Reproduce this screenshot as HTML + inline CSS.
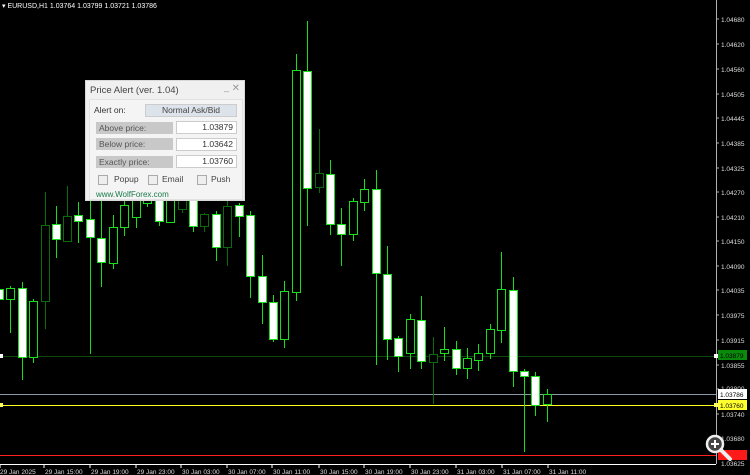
<!DOCTYPE html>
<html><head><meta charset="utf-8"><style>
html,body{margin:0;padding:0;background:#000;width:750px;height:475px;overflow:hidden;font-family:"Liberation Sans",sans-serif}
#c{position:absolute;left:0;top:0}
.dlg{position:absolute;left:85px;top:80px;width:160px;height:121px;background:#f0f0f0;border:1px solid #d8d8d8;box-sizing:border-box;font-size:9px;color:#333}
.dlg .t{position:absolute;left:4px;top:4px;font-size:9.5px;color:#444}
.dlg .x{position:absolute;right:4px;top:2px;color:#999;font-size:10px}
.dlg .m{position:absolute;right:15px;top:1px;color:#999;font-size:9px}
.pn{position:absolute;left:3px;top:18px;width:152px;height:99px;border:1px solid #e2e2e2;background:#f4f4f4}
.ab{position:absolute;font-size:8.5px}
.lbl{position:absolute;left:10px;width:77px;height:12px;background:#c8c8c8;color:#555;line-height:12px;padding-left:3px;box-sizing:border-box;font-size:8.5px}
.ed{position:absolute;left:90px;width:61px;height:13px;background:#fff;border:1px solid #ccc;box-sizing:border-box;text-align:right;padding-right:3px;line-height:11px;font-size:8.5px;color:#333}
.cb{position:absolute;top:94px;width:8px;height:8px;border:1px solid #aaa;background:#eee}
.ct{position:absolute;top:93px;font-size:8.5px;color:#444}
</style></head><body>
<svg id="c" width="750" height="475" xmlns="http://www.w3.org/2000/svg" shape-rendering="crispEdges">
<text x="2" y="8" fill="#fff" font-size="7" font-family="Liberation Sans">▾ EURUSD,H1  1.03764 1.03799 1.03721 1.03786</text>
<line x1="716.5" y1="0" x2="716.5" y2="464" stroke="#b0b0b0"/>
<g fill="#ddd" font-size="6.5" font-family="Liberation Sans">
<text x="721" y="22">1.04680</text><text x="721" y="47">1.04620</text><text x="721" y="72">1.04560</text><text x="721" y="97">1.04505</text><text x="721" y="121">1.04445</text><text x="721" y="146">1.04385</text><text x="721" y="171">1.04325</text><text x="721" y="195">1.04270</text><text x="721" y="220">1.04210</text><text x="721" y="244">1.04150</text><text x="721" y="269">1.04090</text><text x="721" y="293">1.04035</text><text x="721" y="318">1.03975</text><text x="721" y="343">1.03915</text><text x="721" y="368">1.03855</text><text x="721" y="391">1.03800</text><text x="721" y="417">1.03740</text><text x="721" y="441">1.03680</text><text x="721" y="466">1.03625</text>
</g>
<g stroke="#b0b0b0"><path d="M716 19h3M716 44h3M716 69h3M716 94h3M716 118h3M716 143h3M716 168h3M716 192h3M716 217h3M716 241h3M716 266h3M716 290h3M716 315h3M716 340h3M716 365h3M716 389h3M716 414h3M716 438h3"/></g>
<line x1="0" y1="356.5" x2="716" y2="356.5" stroke="#0c4a0c"/>
<line x1="0" y1="394.5" x2="716" y2="394.5" stroke="#8a9aa8"/>
<line x1="0" y1="405.5" x2="716" y2="405.5" stroke="#ffff20"/>
<line x1="0" y1="455.5" x2="716" y2="455.5" stroke="#ff2020"/>
<line x1="0" y1="464.5" x2="716" y2="464.5" stroke="#fff"/>
<rect x="714" y="354" width="4" height="4" fill="#fff"/><rect x="0" y="354" width="3" height="4" fill="#fff"/>
<rect x="714" y="403" width="4" height="4" fill="#ffff60"/><rect x="0" y="403" width="3" height="4" fill="#ffff60"/>
<rect x="718" y="350" width="29" height="10" fill="#0a8a0a"/><text x="720" y="358" fill="#000" font-size="6.5" font-family="Liberation Sans">1.03879</text>
<rect x="718" y="389" width="29" height="10" fill="#fff"/><text x="720" y="397" fill="#000" font-size="6.5" font-family="Liberation Sans">1.03786</text>
<rect x="718" y="400" width="29" height="10" fill="#ffff30"/><text x="720" y="408" fill="#000" font-size="6.5" font-family="Liberation Sans">1.03760</text>
<rect x="718" y="450" width="29" height="10" fill="#ff1a1a"/>
<g stroke="#fff"><path d="M0 465v3M44 465v3M90 465v3M136 465v3M181 465v3M227 465v3M272 465v3M319 465v3M364 465v3M410 465v3M456 465v3M502 465v3M548 465v3"/></g>
<g fill="#ddd" font-size="6.5" font-family="Liberation Sans">
<text x="0" y="474">29 Jan 2025</text><text x="45" y="474">29 Jan 15:00</text><text x="91" y="474">29 Jan 19:00</text><text x="137" y="474">29 Jan 23:00</text><text x="182" y="474">30 Jan 03:00</text><text x="228" y="474">30 Jan 07:00</text><text x="273" y="474">30 Jan 11:00</text><text x="320" y="474">30 Jan 15:00</text><text x="365" y="474">30 Jan 19:00</text><text x="411" y="474">30 Jan 23:00</text><text x="457" y="474">31 Jan 03:00</text><text x="503" y="474">31 Jan 07:00</text><text x="549" y="474">31 Jan 11:00</text>
</g>
<g id="cs"></g>
<g>
<circle cx="715" cy="444" r="8" fill="#444" stroke="#eee" stroke-width="2.5" shape-rendering="auto"/>
<line x1="721" y1="450" x2="730" y2="459" stroke="#eee" stroke-width="4" stroke-linecap="round" shape-rendering="auto"/>
<path d="M711 444h8M715 440v8" stroke="#fff" stroke-width="2"/>
</g>
</svg>
<script>
var d=[[-1,286,300,289,299,'w'],[10,286,333,288,299,'h'],[22,282,380,288,357,'w'],[33,299,363,301,357,'h'],[45,192,329,225,301,'d'],[56,206,258,224,239,'w'],[67,186,242,216,241,'d'],[78,202,243,215,221,'w'],[90,195,354,219,237,'w'],[101,195,287,238,262,'w'],[113,215,269,227,263,'h'],[124,195,236,205,227,'h'],[136,195,228,198,217,'h'],[147,195,207,198,203,'h'],[159,195,226,198,221,'w'],[170,195,222,200,222,'h'],[182,195,213,200,209,'d'],[193,195,232,200,226,'w'],[204,213,232,214,226,'d'],[216,211,261,214,247,'w'],[227,200,266,206,247,'d'],[239,203,237,205,216,'w'],[250,211,298,215,276,'w'],[262,255,324,276,302,'w'],[273,295,342,302,339,'w'],[284,281,348,291,339,'h'],[296,54,301,70,292,'h'],[307,21,226,71,188,'w'],[319,129,193,173,187,'d'],[330,160,235,174,224,'w'],[341,208,266,224,234,'w'],[353,198,241,201,234,'h'],[364,179,211,189,202,'h'],[376,170,365,189,273,'w'],[387,246,360,274,339,'w'],[398,336,372,338,356,'w'],[410,314,369,319,353,'h'],[421,296,369,320,361,'w'],[433,337,404,354,362,'d'],[444,327,361,349,353,'h'],[456,341,375,349,368,'w'],[467,348,379,358,368,'h'],[478,344,371,353,360,'h'],[490,324,359,329,353,'h'],[501,252,343,289,330,'h'],[513,277,387,290,371,'w'],[524,369,452,371,376,'w'],[535,372,416,376,405,'w'],[547,389,422,394,404,'h']];
var s='';d.forEach(function(c){var col=c[5]=='d'?'#0b6a0b':'#18e018';
s+='<line x1="'+(c[0]+.5)+'" y1="'+c[1]+'" x2="'+(c[0]+.5)+'" y2="'+c[2]+'" stroke="'+col+'"/>';
s+='<rect x="'+(c[0]-3.5)+'" y="'+(c[3]+.5)+'" width="8" height="'+(c[4]-c[3])+'" fill="'+(c[5]=='w'?'#fff':'#000')+'" stroke="'+col+'"/>';});
document.getElementById('cs').innerHTML=s;
</script>
<div class="dlg">
<div class="t">Price Alert (ver. 1.04)</div><div class="m">_</div><div class="x">✕</div>
<div class="pn"></div>
<div class="ab" style="left:8px;top:24px">Alert on:</div>
<div style="position:absolute;left:59px;top:23px;width:92px;height:13px;background:#dde3ea;border:1px solid #ccc;box-sizing:border-box;text-align:center;line-height:11px;font-size:8.5px;color:#444">Normal Ask/Bid</div>
<div class="lbl" style="top:41px">Above price:</div><div class="ed" style="top:40px">1.03879</div>
<div class="lbl" style="top:57px">Below price:</div><div class="ed" style="top:57px">1.03642</div>
<div class="lbl" style="top:75px">Exactly price:</div><div class="ed" style="top:74px">1.03760</div>
<div class="cb" style="left:12px"></div><div class="ct" style="left:28px">Popup</div>
<div class="cb" style="left:62px"></div><div class="ct" style="left:76px">Email</div>
<div class="cb" style="left:111px"></div><div class="ct" style="left:125px">Push</div>
<div style="position:absolute;left:10px;top:109px;font-size:8px;color:#1a7a4a">www.WolfForex.com</div>
</div>
</body></html>
